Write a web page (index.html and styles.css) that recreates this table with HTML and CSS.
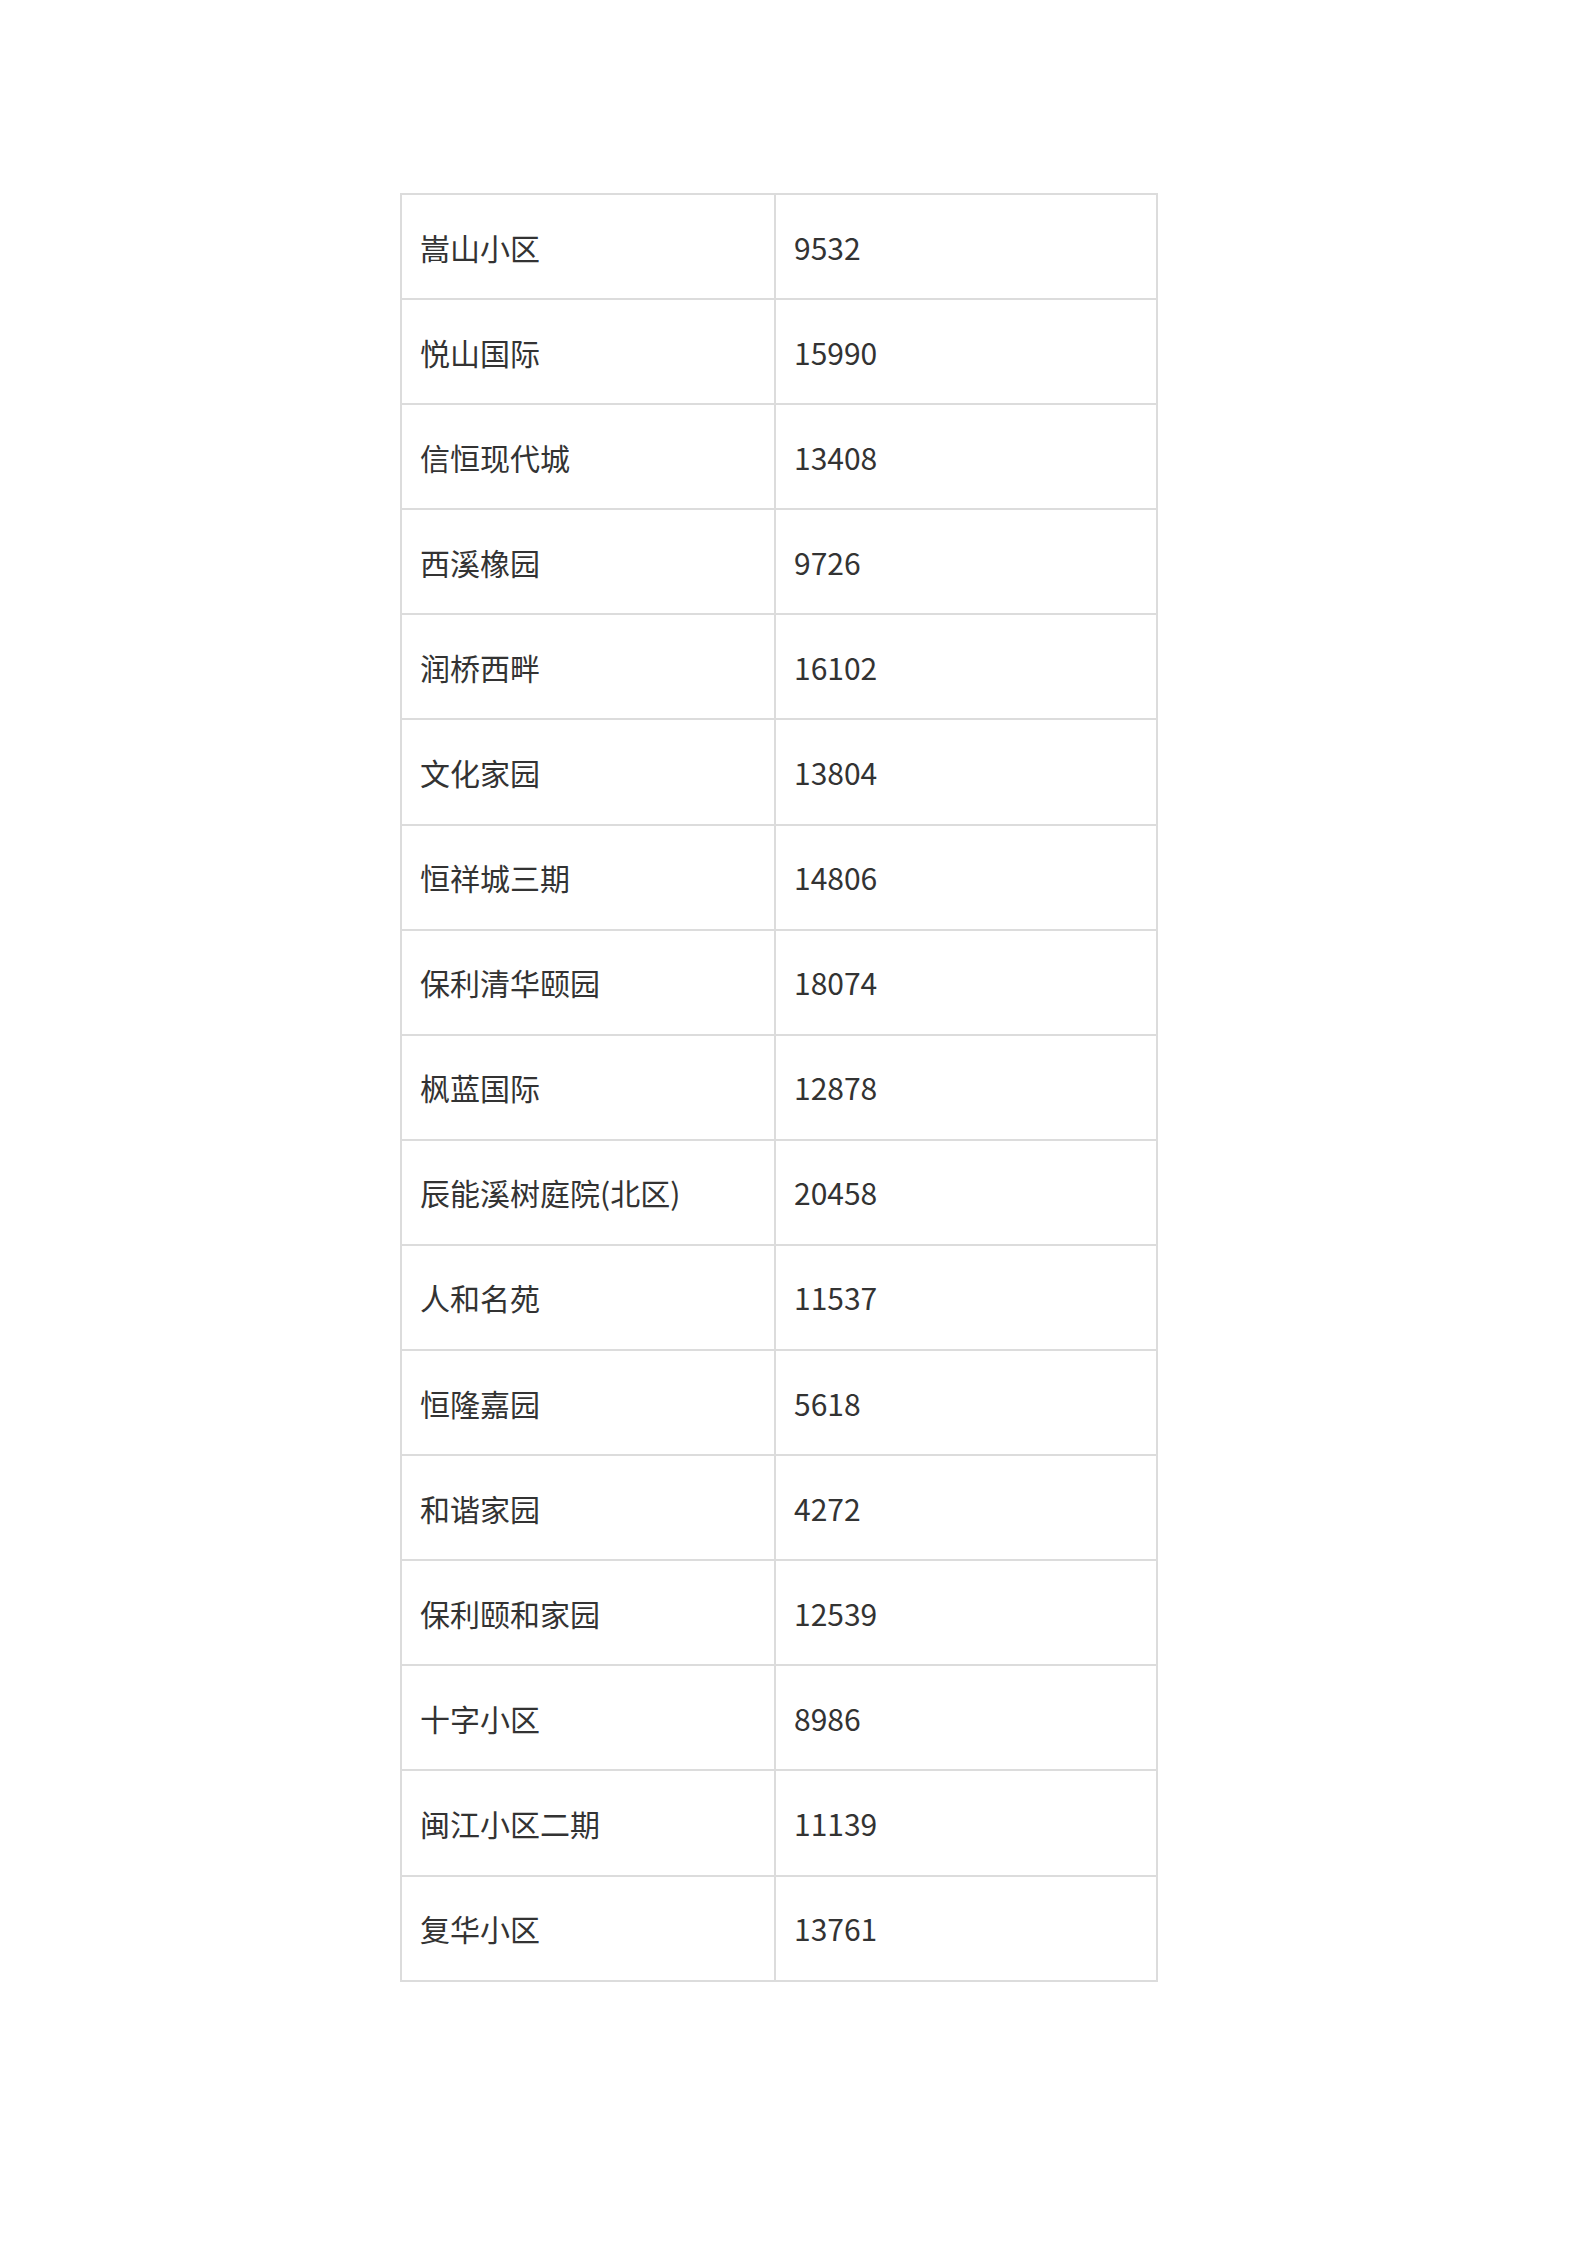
FILE: index.html
```html
<!DOCTYPE html>
<html lang="zh-CN">
<head>
<meta charset="utf-8">
<title>小区列表</title>
<link rel="stylesheet" href="styles.css">
</head>
<body>
<main class="page">
<table class="data-table">
<colgroup><col class="col-name"><col class="col-num"></colgroup>
<tbody>
<tr><td>嵩山小区</td><td>9532</td></tr>
<tr><td>悦山国际</td><td>15990</td></tr>
<tr><td>信恒现代城</td><td>13408</td></tr>
<tr><td>西溪橡园</td><td>9726</td></tr>
<tr><td>润桥西畔</td><td>16102</td></tr>
<tr><td>文化家园</td><td>13804</td></tr>
<tr><td>恒祥城三期</td><td>14806</td></tr>
<tr><td>保利清华颐园</td><td>18074</td></tr>
<tr><td>枫蓝国际</td><td>12878</td></tr>
<tr><td>辰能溪树庭院(北区)</td><td>20458</td></tr>
<tr><td>人和名苑</td><td>11537</td></tr>
<tr><td>恒隆嘉园</td><td>5618</td></tr>
<tr><td>和谐家园</td><td>4272</td></tr>
<tr><td>保利颐和家园</td><td>12539</td></tr>
<tr><td>十字小区</td><td>8986</td></tr>
<tr><td>闽江小区二期</td><td>11139</td></tr>
<tr><td>复华小区</td><td>13761</td></tr>
</tbody>
</table>
</main>
</body>
</html>
```

FILE: styles.css
```css
html, body {
  margin: 0;
  padding: 0;
  background: #ffffff;
}

.page {
  padding: 193px 0 0 400px;
}

.data-table {
  border-collapse: collapse;
  width: 756px;
  table-layout: fixed;
  font-family: "Noto Sans CJK SC", "Noto Sans", sans-serif;
  font-size: 30px;
  color: #333333;
}

.col-name { width: 374px; }
.col-num { width: 382px; }

.data-table td {
  border: 2px solid #dcdcdc;
  height: 103.1px;
  padding: 0 18px;
  vertical-align: middle;
  line-height: 1.2;
  white-space: nowrap;
}
```
